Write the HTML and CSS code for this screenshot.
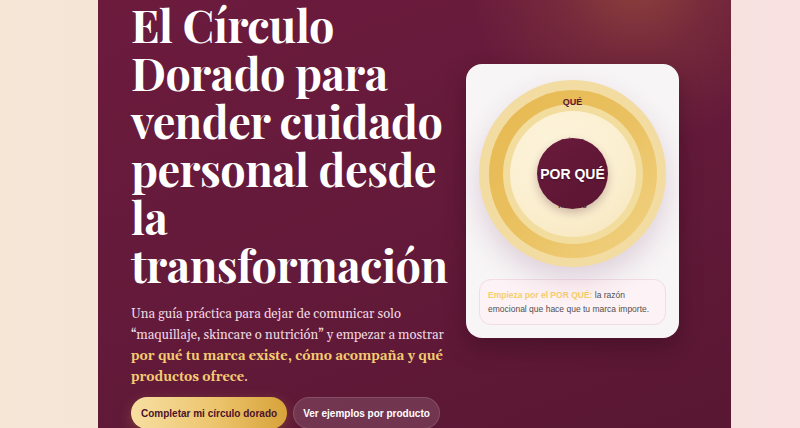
FILE: index.html
```html
<!DOCTYPE html>
<html lang="es">
<head>
<meta charset="utf-8">
<title>El Círculo Dorado</title>
<link rel="stylesheet" href="styles.css">
</head>
<body>
<main class="page">
  <section class="hero">
    <div class="hero-text">
      <h1 class="title">El Círculo Dorado para vender cuidado personal desde la transformación</h1>
      <p class="lead">Una guía práctica para dejar de comunicar solo “maquillaje, skincare o nutrición” y empezar a mostrar <strong>por qué tu marca existe, cómo acompaña y qué productos ofrece</strong>.</p>
      <div class="actions">
        <a class="btn btn-gold" href="#">Completar mi círculo dorado</a>
        <a class="btn btn-ghost" href="#">Ver ejemplos por producto</a>
      </div>
    </div>
    <aside class="card">
      <div class="circle-wrap">
        <div class="ring ring-que">
          <span class="label label-que">QUÉ</span>
          <div class="ring ring-gold">
            <div class="ring ring-band">
              <div class="ring ring-como">
                <span class="label label-como">CÓMO</span>
                <span class="label label-bottom">hábitos</span>
                <div class="ring ring-why">POR QUÉ</div>
              </div>
            </div>
          </div>
        </div>
      </div>
      <p class="note"><strong>Empieza por el POR QUÉ:</strong> la razón emocional que hace que tu marca importe.</p>
    </aside>
  </section>
</main>
</body>
</html>
```
FILE: styles.css
```css
* { box-sizing: border-box; }
html, body { margin: 0; padding: 0; }
body {
  height: 428px;
  overflow: hidden;
  background: linear-gradient(90deg, #f5e6d6 0%, #f6e4dc 55%, #f8e1e0 100%);
  font-family: "Liberation Sans", Arial, sans-serif;
}
.page {
  padding-left: 98px;
}
.hero {
  width: 633px;
  height: 440px;
  display: grid;
  grid-template-columns: 322px 213px;
  column-gap: 13px;
  align-items: start;
  padding: 0 0 0 33px;
  background:
    radial-gradient(circle at 85% -6%, rgba(160, 85, 60, 0.7) 0, rgba(140, 65, 60, 0.4) 80px, rgba(110, 30, 60, 0) 170px),
    linear-gradient(160deg, #6c1b3d 0%, #641a3a 50%, #581733 100%);
}
.title {
  margin: 0;
  font-family: "Playfair Display", "Liberation Serif", serif;
  font-weight: 700;
  font-size: 45px;
  line-height: 48px;
  letter-spacing: -0.5px;
  color: #ffffff;
}
.lead {
  margin: 16px 0 0;
  font-family: Gelasio, "Liberation Serif", serif;
  font-size: 13px;
  line-height: 21px;
  color: #efd9e2;
}
.lead strong {
  color: #f4cb72;
  font-weight: 700;
}
.actions {
  display: flex;
  gap: 6px;
  margin-top: 9px;
}
.btn {
  display: inline-flex;
  align-items: center;
  height: 32px;
  padding: 0 10px;
  border-radius: 16px;
  font-family: "Liberation Sans", Arial, sans-serif;
  font-size: 10px;
  font-weight: 700;
  text-decoration: none;
  white-space: nowrap;
}
.btn-gold {
  background: linear-gradient(90deg, #f7dfa2 0%, #ecc46c 55%, #d7a23a 100%);
  color: #4c1129;
  box-shadow: 0 4px 14px rgba(220, 170, 70, 0.25);
}
.btn-ghost {
  padding: 0 9px;
  background: rgba(255, 255, 255, 0.13);
  border: 1px solid rgba(255, 255, 255, 0.12);
  color: #ffffff;
}
.card {
  margin-top: 64px;
  height: 274px;
  border-radius: 16px;
  background: #f7f5f6;
  padding: 16px 13px 0;
  box-shadow: 0 10px 22px rgba(40, 5, 20, 0.35);
}
.circle-wrap {
  display: flex;
  justify-content: center;
}
.ring {
  border-radius: 50%;
  display: flex;
  align-items: center;
  justify-content: center;
  position: relative;
}
.ring-que {
  width: 187px;
  height: 187px;
  background: #f3dca1;
  box-shadow: 0 12px 28px rgba(110, 40, 90, 0.18);
}
.ring-gold {
  width: 168px;
  height: 168px;
  background: linear-gradient(135deg, #e6b84f 0%, #eac161 50%, #f1d283 100%);
}
.ring-band {
  width: 140px;
  height: 140px;
  background: #f2dd9f;
}
.ring-como {
  width: 126px;
  height: 126px;
  background: radial-gradient(circle at 40% 30%, #fdf4dc 0%, #fbefd0 55%, #f5e4b8 100%);
}
.ring-why {
  width: 71px;
  height: 71px;
  background: linear-gradient(145deg, #6a1a3b 0%, #5a1532 100%);
  color: #ffffff;
  font-size: 14px;
  font-weight: 700;
  text-shadow: 0 1px 2px rgba(0, 0, 0, 0.35);
  box-shadow: 0 4px 10px rgba(70, 10, 30, 0.25);
  z-index: 2;
}
.label {
  position: absolute;
  left: 50%;
  transform: translateX(-50%);
  font-size: 9px;
  font-weight: 700;
  color: #5a1a33;
  z-index: 1;
}
.label-que { top: 17px; z-index: 3; }
.label-como { top: 26px; color: #6a3040; font-size: 8px; }
.label-bottom { bottom: 27px; color: #6a3a3a; font-size: 8px; }
.note {
  margin: 12px 0 0;
  padding: 8px 8px;
  border-radius: 12px;
  background: #fdf2f5;
  border: 1px solid #f1dde3;
  font-size: 8.5px;
  line-height: 14px;
  color: #505050;
}
.note strong {
  color: #f6cf6c;
}
```
